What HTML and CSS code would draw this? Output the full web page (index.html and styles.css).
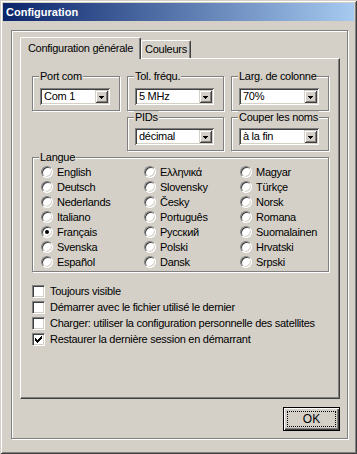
FILE: index.html
```html
<!DOCTYPE html>
<html lang="fr">
<head>
    <meta charset="UTF-8">
    <title>Configuration</title>
    <link rel="stylesheet" href="styles.css">
</head>
<body>

<div class="window">
    <div class="titlebar">Configuration</div>

    <div class="frame">
        <div class="tabs">
            <div class="tab active">Configuration générale</div>
            <div class="tab">Couleurs</div>
        </div>

        <div class="panel">
            <div class="top-grid">
                <div class="group">
                    <span class="legend">Port com</span>
                    <div class="combo"><span class="value">Com 1</span><span class="arrow"><svg width="5" height="3"><path d="M0 0h5v1H0zM1 1h3v1H1zM2 2h1v1H2z"/></svg></span></div>
                </div>
                <div class="group">
                    <span class="legend">Tol. fréqu.</span>
                    <div class="combo"><span class="value">5 MHz</span><span class="arrow"><svg width="5" height="3"><path d="M0 0h5v1H0zM1 1h3v1H1zM2 2h1v1H2z"/></svg></span></div>
                </div>
                <div class="group">
                    <span class="legend">Larg. de colonne</span>
                    <div class="combo"><span class="value">70%</span><span class="arrow"><svg width="5" height="3"><path d="M0 0h5v1H0zM1 1h3v1H1zM2 2h1v1H2z"/></svg></span></div>
                </div>

                <div class="group row2 col2">
                    <span class="legend">PIDs</span>
                    <div class="combo"><span class="value">décimal</span><span class="arrow"><svg width="5" height="3"><path d="M0 0h5v1H0zM1 1h3v1H1zM2 2h1v1H2z"/></svg></span></div>
                </div>
                <div class="group row2">
                    <span class="legend">Couper les noms</span>
                    <div class="combo"><span class="value">à la fin</span><span class="arrow"><svg width="5" height="3"><path d="M0 0h5v1H0zM1 1h3v1H1zM2 2h1v1H2z"/></svg></span></div>
                </div>

                <div class="group langue">
                    <span class="legend">Langue</span>
                    <div class="radios">
                        <label class="radio-item"><span class="radio"></span>English</label>
                        <label class="radio-item"><span class="radio"></span>Deutsch</label>
                        <label class="radio-item"><span class="radio"></span>Nederlands</label>
                        <label class="radio-item"><span class="radio"></span>Italiano</label>
                        <label class="radio-item"><span class="radio checked"></span>Français</label>
                        <label class="radio-item"><span class="radio"></span>Svenska</label>
                        <label class="radio-item"><span class="radio"></span>Español</label>

                        <label class="radio-item"><span class="radio"></span>Ελληνικά</label>
                        <label class="radio-item"><span class="radio"></span>Slovensky</label>
                        <label class="radio-item"><span class="radio"></span>Česky</label>
                        <label class="radio-item"><span class="radio"></span>Português</label>
                        <label class="radio-item"><span class="radio"></span>Русский</label>
                        <label class="radio-item"><span class="radio"></span>Polski</label>
                        <label class="radio-item"><span class="radio"></span>Dansk</label>

                        <label class="radio-item"><span class="radio"></span>Magyar</label>
                        <label class="radio-item"><span class="radio"></span>Türkçe</label>
                        <label class="radio-item"><span class="radio"></span>Norsk</label>
                        <label class="radio-item"><span class="radio"></span>Romana</label>
                        <label class="radio-item"><span class="radio"></span>Suomalainen</label>
                        <label class="radio-item"><span class="radio"></span>Hrvatski</label>
                        <label class="radio-item"><span class="radio"></span>Srpski</label>
                    </div>
                </div>
            </div>

            <div class="checks">
                <label class="check-item"><span class="check"></span>Toujours visible</label>
                <label class="check-item"><span class="check"></span>Démarrer avec le fichier utilisé le dernier</label>
                <label class="check-item"><span class="check"></span>Charger: utiliser la configuration personnelle des satellites</label>
                <label class="check-item"><span class="check"><svg width="7" height="7"><path d="M6 0h1v1H6zM5 1h2v1H5zM0 2h1v1H0zM4 2h3v1H4zM0 3h2v1H0zM3 3h3v1H3zM0 4h5v1H0zM1 5h3v1H1zM2 6h1v1H2z"/></svg></span>Restaurer la dernière session en démarrant</label>
            </div>
        </div>

        <div class="actions">
            <button class="btn default"><span class="focus">OK</span></button>
        </div>
    </div>
</div>

</body>
</html>
```

FILE: styles.css
```css
body { margin: 0; background: #d4d0c8; font-family: "Liberation Sans", Arial, sans-serif; font-size: 11px; letter-spacing: -0.28px; color: #000; }

/* fenetre classique */
.window { width: 357px; height: 454px; box-sizing: border-box; padding: 3px; background: #d4d0c8;
    box-shadow: inset 1px 1px #d4d0c8, inset -1px -1px #404040, inset 2px 2px #fff, inset -2px -2px #808080; }
.titlebar { height: 18px; line-height: 18px; padding-left: 3px; color: #fff; font-weight: bold; font-size: 11px; letter-spacing: normal;
    background: linear-gradient(to right, #0a246a, #a6caf0); }

.frame { margin: 9px 0 0 8px; width: 337px; height: 409px; box-sizing: border-box; padding: 6px 7px 0 8px;
    border: 1px solid #808080; box-shadow: 1px 1px #fff, inset 1px 1px #fff; }

/* onglets */
.tabs { display: flex; align-items: flex-end; height: 21px; }
.tab { height: 18px; line-height: 17px; box-sizing: border-box; text-align: center; width: 50px;
    border-top: 1px solid #fff; border-left: 1px solid #fff; border-right: 1px solid #404040;
    box-shadow: inset -1px 0 #808080; border-radius: 2px 2px 0 0; background: #d4d0c8; }
.tab.active { width: 121px; height: 22px; line-height: 20px; margin-bottom: -1px; position: relative; z-index: 1; }

.panel { height: 341px; box-sizing: border-box; padding: 17px 10px 0 11px;
    border-top: 1px solid #fff; border-left: 1px solid #fff; border-right: 1px solid #404040; border-bottom: 1px solid #404040;
    box-shadow: inset -1px -1px #808080; }

.top-grid { display: grid; grid-template-columns: 88px 97px 1fr; column-gap: 7px; row-gap: 6px; }
.group { position: relative; padding: 11px 9px 5px 7px; border: 1px solid #808080; box-shadow: 1px 1px #fff, inset 1px 1px #fff; }
.group.row2 { padding-top: 10px; }
.group.col2 { grid-column: 2; }
.legend { position: absolute; top: -7px; left: 6px; padding: 0 1px; line-height: 13px; background: #d4d0c8; white-space: nowrap; }

/* liste deroulante */
.combo { display: flex; height: 17px; box-sizing: border-box; padding: 2px; background: #fff;
    box-shadow: inset 1px 1px #808080, inset -1px -1px #fff, inset 2px 2px #404040, inset -2px -2px #d4d0c8; }
.combo .value { flex: 1; padding-left: 2px; line-height: 13px; }
.combo .arrow { width: 13px; display: flex; align-items: center; justify-content: center; background: #d4d0c8;
    box-shadow: inset 1px 1px #d4d0c8, inset -1px -1px #404040, inset 2px 2px #fff, inset -2px -2px #808080; }
.combo .arrow svg { display: block; margin-top: 1px; }

/* langues */
.group.langue { grid-column: 1 / -1; padding: 6px 0 2px 8px; }
.radios { display: grid; grid-template-columns: 103px 96px auto; grid-template-rows: repeat(7, 15px); grid-auto-flow: column; }
.radio-item { display: flex; align-items: center; gap: 4px; white-space: nowrap; }
.radio { width: 12px; height: 12px; box-sizing: border-box; border-radius: 50%; border: 1px solid; border-color: #808080 #fff #fff #808080;
    background: #fff; box-shadow: inset 1px 1px #404040, inset -1px -1px #d4d0c8; position: relative; }
.radio.checked::after { content: ""; position: absolute; left: 3px; top: 3px; width: 4px; height: 4px; border-radius: 50%; background: #000; }

/* cases a cocher */
.checks { margin-top: 11px; }
.check-item { display: flex; align-items: center; gap: 5px; height: 16px; white-space: nowrap; }
.check { width: 13px; height: 13px; box-sizing: border-box; border: 1px solid; border-color: #808080 #fff #fff #808080;
    background: #fff; box-shadow: inset 1px 1px #404040, inset -1px -1px #d4d0c8; padding: 2px; }
.check svg { display: block; }

.actions { display: flex; justify-content: flex-end; margin-top: 8px; }
.btn { width: 57px; height: 24px; box-sizing: border-box; padding: 3px; margin: 0; font: inherit; font-size: 12px; color: #000;
    background: #d4d0c8; border: 1px solid #000; box-shadow: inset 1px 1px #fff, inset -1px -1px #404040, inset -2px -2px #808080; }
.btn .focus { display: block; height: 100%; box-sizing: border-box; border: 1px dotted #000; line-height: 14px; }
```
